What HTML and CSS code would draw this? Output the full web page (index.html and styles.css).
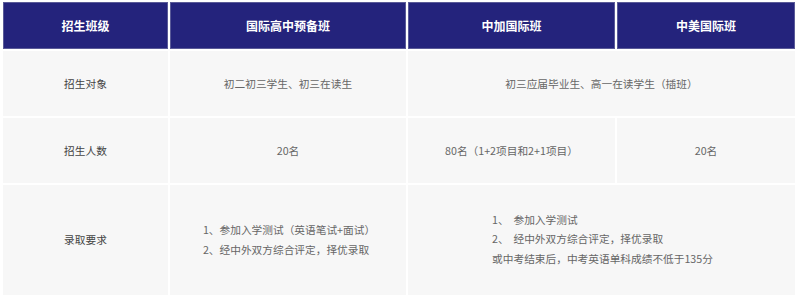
FILE: index.html
```html
<!DOCTYPE html>
<html lang="zh">
<head>
<meta charset="utf-8">
<link rel="stylesheet" href="styles.css">
</head>
<body>
<div class="table">
  <div class="cell head">招生班级</div>
  <div class="cell head">国际高中预备班</div>
  <div class="cell head">中加国际班</div>
  <div class="cell head">中美国际班</div>

  <div class="cell label">招生对象</div>
  <div class="cell val">初二初三学生、初三在读生</div>
  <div class="cell val span2">初三应届毕业生、高一在读学生（插班）</div>

  <div class="cell label">招生人数</div>
  <div class="cell val">20名</div>
  <div class="cell val">80名（1+2项目和2+1项目）</div>
  <div class="cell val">20名</div>

  <div class="cell label last">录取要求</div>
  <div class="cell val last">
    <div class="lines">
      <p>1、参加入学测试（英语笔试+面试）</p>
      <p>2、经中外双方综合评定，择优录取</p>
    </div>
  </div>
  <div class="cell val span2 last">
    <div class="lines lines2">
      <p>1、&nbsp; 参加入学测试</p>
      <p>2、&nbsp; 经中外双方综合评定，择优录取</p>
      <p>或中考结束后，中考英语单科成绩不低于135分</p>
    </div>
  </div>
</div>
</body>
</html>
```

FILE: styles.css
```css
html, body {
  margin: 0;
  padding: 0;
  background: #ffffff;
}
body {
  font-family: "Noto Sans CJK SC", "Noto Sans", sans-serif;
  overflow: hidden;
}
.table {
  display: grid;
  grid-template-columns: 165px 236px 207px 178px;
  grid-template-rows: 47px 65px 65px 116px;
  gap: 2px;
  padding: 2px 0 0 3px;
}
.cell {
  display: flex;
  align-items: center;
  justify-content: center;
  background: #f7f7f7;
  font-size: 10.7px;
  color: #666;
}
.last {
  padding-bottom: 8px;
}
.head {
  background: #24237c;
  color: #fff;
  font-weight: bold;
  font-size: 12px;
  box-shadow: inset 0 0 0 1px #5a5a98;
}
.label {
  color: #444;
}
.span2 {
  grid-column: span 2;
}
.lines p {
  margin: 0;
  line-height: 20px;
}
.lines {
  padding-top: 1px;
  padding-left: 2px;
}
.lines2 p {
  line-height: 19.5px;
}
.lines2 {
  padding-top: 0;
}
```
